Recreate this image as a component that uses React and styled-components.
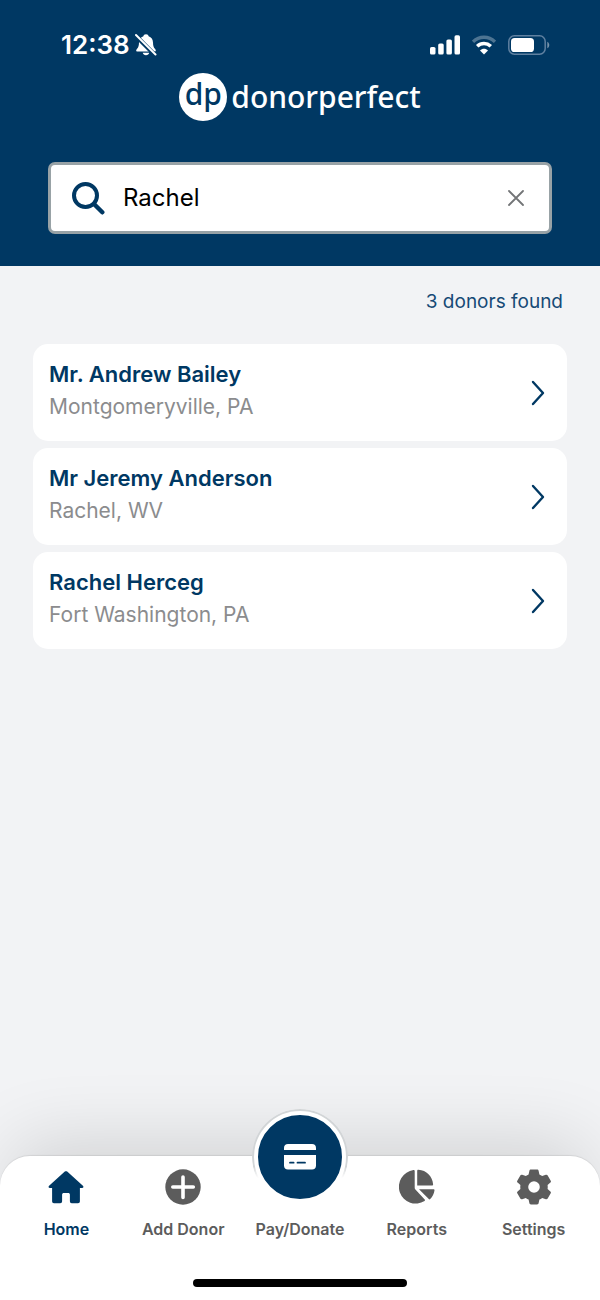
import { useState } from 'react'
import styled, { createGlobalStyle, ThemeProvider } from 'styled-components'

const theme = {
  colors: {
    primary: '#003863',
    background: '#f2f3f5',
    surface: '#ffffff',
    text: '#000000',
    textSecondary: '#8b8c8e',
    nav: '#5c5c5c',
    inputBorder: '#98a2a6'
  }
}

const GlobalStyle = createGlobalStyle`
  * {
    box-sizing: border-box;
  }

  body {
    margin: 0;
    background: ${({ theme }) => theme.colors.background};
    font-family: Inter, 'Liberation Sans', sans-serif;
  }
`

const Screen = styled.div`
  min-height: 100vh;
  display: flex;
  flex-direction: column;
  overflow: hidden;
`

const Header = styled.header`
  display: flex;
  flex-direction: column;
  padding: 28px 48px 32px;
  background: ${({ theme }) => theme.colors.primary};
  color: white;
`

const StatusBar = styled.div`
  display: flex;
  align-items: center;
  justify-content: space-between;
  height: 34px;
  padding: 0 2px 0 13px;
`

const StatusGroup = styled.div`
  display: flex;
  align-items: center;
  gap: ${({ $gap }) => $gap}px;
`

const Clock = styled.time`
  font-size: 26px;
  font-weight: 600;
  line-height: 34px;
`

const Brand = styled.div`
  display: flex;
  align-items: center;
  justify-content: center;
  gap: 4px;
  height: 48px;
  margin-top: 11px;
  font-family: 'Noto Sans', 'Open Sans', sans-serif;
`

const BrandMark = styled.span`
  width: 48px;
  height: 48px;
  border-radius: 50%;
  background: white;
  color: ${({ theme }) => theme.colors.primary};
  font-size: 30px;
  font-weight: 500;
  line-height: 42px;
  text-align: center;
`

const BrandName = styled.span`
  font-size: 30px;
  font-weight: 500;
  line-height: 44px;
`

const SearchForm = styled.form`
  display: flex;
  align-items: center;
  gap: 18px;
  height: 72px;
  margin-top: 41px;
  padding: 0 20px;
  background: ${({ theme }) => theme.colors.surface};
  border: 3px solid ${({ theme }) => theme.colors.inputBorder};
  border-radius: 7px;
  color: ${({ theme }) => theme.colors.primary};
`

const SearchInput = styled.input`
  flex: 1;
  min-width: 0;
  padding: 0;
  border: none;
  outline: none;
  background: transparent;
  color: ${({ theme }) => theme.colors.text};
  font-family: inherit;
  font-size: 24px;
  line-height: 32px;
`

const ClearButton = styled.button`
  display: flex;
  padding: 5px;
  border: none;
  background: none;
  color: #737577;
  cursor: pointer;
`

const Main = styled.main`
  flex: 1;
  padding: 22px 33px;
`

const ResultCount = styled.p`
  margin: 0 4px 28px;
  color: #164a75;
  font-size: 19px;
  line-height: 28px;
  text-align: right;
`

const DonorList = styled.ul`
  display: flex;
  flex-direction: column;
  gap: 7px;
  margin: 0;
  padding: 0;
  list-style: none;
`

const DonorCard = styled.a`
  display: flex;
  align-items: center;
  justify-content: space-between;
  min-height: 97px;
  padding: 0 22px 0 16px;
  background: ${({ theme }) => theme.colors.surface};
  border-radius: 15px;
  color: ${({ theme }) => theme.colors.primary};
  text-decoration: none;
`

const DonorInfo = styled.div`
  display: flex;
  flex-direction: column;
  gap: 5px;
  padding-bottom: 4px;
`

const DonorName = styled.span`
  font-size: 22px;
  font-weight: 600;
  line-height: 28px;
`

const DonorPlace = styled.span`
  color: ${({ theme }) => theme.colors.textSecondary};
  font-size: 21px;
  line-height: 28px;
`

const BottomBar = styled.footer`
  display: flex;
  flex-direction: column;
  align-items: center;
  gap: 38px;
  padding: 13px 8px;
  background: ${({ theme }) => theme.colors.surface};
  border-radius: 30px 30px 0 0;
  box-shadow: 0 -1px 1px rgba(0, 0, 0, 0.08), 0 -26px 76px -14px rgba(0, 0, 0, 0.14);
`

const Nav = styled.nav`
  display: grid;
  grid-template-columns: repeat(5, 1fr);
  width: 100%;
`

const NavItem = styled.a`
  position: relative;
  display: flex;
  flex-direction: column;
  align-items: center;
  gap: 12px;
  color: ${({ theme, $active }) => ($active ? theme.colors.primary : theme.colors.nav)};
  font-size: 16px;
  font-weight: 600;
  line-height: 24px;
  text-decoration: none;
  white-space: nowrap;
`

const IconSlot = styled.span`
  display: flex;
  align-items: center;
  justify-content: center;
  height: 36px;
`

// The raised circle sits over the top edge of the bar
const PayCircle = styled.span`
  position: absolute;
  bottom: 37px;
  display: flex;
  align-items: center;
  justify-content: center;
  width: 94px;
  height: 94px;
  border: 5px solid white;
  border-radius: 50%;
  background: ${({ theme }) => theme.colors.primary};
  color: white;

  &::before {
    content: '';
    position: absolute;
    inset: -6px;
    border: 2px solid #d2d5d7;
    border-radius: 50%;
    mask-image: linear-gradient(black 60%, transparent 72%);
  }
`

const HomeIndicator = styled.div`
  width: 214px;
  height: 8px;
  border-radius: 4px;
  background: black;
`

const BellOffIcon = () => (
  <svg width="22" height="24" viewBox="0 0 22 24" fill="currentColor" aria-hidden="true">
    <path d="M11 1.200c-1.500 0-2.500.9-2.600 2.100C5.600 4.300 4.100 6.500 4 9.500c-.1 3.300-.5 4.800-2.100 6.400-1.300 1.300-.8 2.600.8 2.600h16.600c1.600 0 2.100-1.300.8-2.600-1.600-1.600-2-3.100-2.100-6.400-.1-3-1.600-5.200-4.400-6.200C13.500 2.100 12.500 1.200 11 1.200zM7.700 19.800h6.600c-.4 1.500-1.600 2.500-3.300 2.500s-2.900-1-3.300-2.500z" />
    <path d="M0 2 20.500 22.500" stroke="#003863" strokeWidth="4.400" />
    <path d="M1 2 20.500 21.500" stroke="currentColor" strokeWidth="2" strokeLinecap="round" />
  </svg>
)

const SignalIcon = () => (
  <svg width="30" height="20" viewBox="0 0 30 20" fill="currentColor" aria-hidden="true">
    <rect x="0" y="12" width="5.500" height="7.500" rx="1.600" />
    <rect x="8.200" y="8.500" width="5.500" height="11" rx="1.600" />
    <rect x="16.400" y="4.500" width="5.500" height="15" rx="1.600" />
    <rect x="24.500" y="0.300" width="5.500" height="19.200" rx="1.600" />
  </svg>
)

const WifiIcon = () => (
  <svg width="24" height="20" viewBox="1 0 24 20" fill="none" stroke="currentColor" aria-hidden="true">
    <path d="M2 6.800C8.300.8 17.700.8 24 6.800" strokeWidth="3.400" opacity="0.3" />
    <path d="M6.200 11.200c4-3.700 9.600-3.700 13.600 0" strokeWidth="3.600" />
    <path d="M13 19.500 9 15.500c2.400-2.200 5.600-2.200 8 0z" fill="currentColor" stroke="none" />
  </svg>
)

const BatteryIcon = () => (
  <svg width="42" height="20" viewBox="0 0 42 20" aria-hidden="true">
    <rect x="0.800" y="0.800" width="36.400" height="18.400" rx="5.600" fill="none" stroke="#5f80a0" strokeWidth="1.500" />
    <rect x="3" y="3" width="23" height="14" rx="3.600" fill="white" />
    <path d="M39.300 6.700c2.600 1.300 2.600 5.300 0 6.600z" fill="#7793aa" />
  </svg>
)

const SearchIcon = () => (
  <svg width="34" height="34" viewBox="0 0 34 34" fill="none" stroke="currentColor" aria-hidden="true">
    <circle cx="14.500" cy="14.500" r="11.500" strokeWidth="4" />
    <path d="m23 23 8.300 8.300" strokeWidth="4.400" strokeLinecap="round" />
  </svg>
)

const CloseIcon = () => (
  <svg width="16" height="16" viewBox="0 0 16 16" stroke="currentColor" strokeWidth="1.800" strokeLinecap="round" aria-hidden="true">
    <path d="m1 1 14 14M15 1 1 15" />
  </svg>
)

const ChevronIcon = () => (
  <svg width="14" height="26" viewBox="0 0 14 26" fill="none" stroke="currentColor" strokeWidth="2.400" strokeLinecap="round" strokeLinejoin="round" aria-hidden="true">
    <path d="m2 2 10 11L2 24" />
  </svg>
)

const HomeIcon = () => (
  <svg width="36" height="36" viewBox="0 0 36 36" fill="currentColor" aria-hidden="true">
    <path d="M16.800 2.600c.7-.6 1.700-.6 2.400 0L34.900 16.700c1 .9.600 2.300-.8 2.300h-2.200v13.300c0 1.200-.7 1.900-1.900 1.900h-6.200c-1.200 0-1.900-.7-1.900-1.900v-6.600c0-1.100-.7-1.700-1.700-1.700h-4.400c-1 0-1.700.6-1.700 1.700v6.600c0 1.200-.7 1.900-1.900 1.900H6c-1.200 0-1.900-.7-1.900-1.900V19H1.900C.5 19 .1 17.600 1.100 16.700z" />
  </svg>
)

const AddIcon = () => (
  <svg width="36" height="36" viewBox="0 0 36 36" aria-hidden="true">
    <circle cx="18" cy="18" r="17.700" fill="currentColor" />
    <path d="M18 8v20.500M7.800 18h20.500" stroke="white" strokeWidth="3.600" strokeLinecap="round" />
  </svg>
)

const CardIcon = () => (
  <svg width="34" height="28" viewBox="0 0 34 28" fill="currentColor" aria-hidden="true">
    <path d="M1 7V5c0-2.500 1.500-4 4-4h24c2.500 0 4 1.500 4 4v2z" />
    <path d="M1 12h32v10.500c0 2.500-1.500 4-4 4H5c-2.500 0-4-1.500-4-4z" />
    <path d="M7 19.700h3.600M14.500 19.700h7.500" stroke="#003863" strokeWidth="1.800" strokeLinecap="round" />
  </svg>
)

const PieIcon = () => (
  <svg width="36" height="36" viewBox="0 0 36 36" fill="currentColor" aria-hidden="true">
    <path d="M15.700 1.900v16.800c0 .7.200 1.200.7 1.700l9.300 10.200c.4.500.4 1-.1 1.400A16.800 16.800 0 1 1 14.500 1.100c.8-.1 1.200.1 1.200.8z" />
    <path d="M18.200 2c0-.9.500-1.300 1.300-1.200 7.900.5 14 6.600 14.600 14.400.1.900-.3 1.300-1.200 1.300H18.200z" />
    <path d="M20 20.200h14.500c.7 0 1.100.4 1 1.100-.4 3.500-2 6.500-4.300 8.800-.5.500-1 .5-1.400 0z" />
  </svg>
)

const GearIcon = () => (
  <svg width="36" height="36" viewBox="0 0 36 36" aria-hidden="true">
    <path
      fill="currentColor"
      fillRule="evenodd"
      d="M14.900.5h6.200c.8 0 1.300.5 1.500 1.200l.8 3.700c.8.300 2 1 2.800 1.600l3.600-1.200c.8-.3 1.500 0 1.900.6l3 5.300c.4.700.3 1.400-.3 1.900l-2.800 2.500c.2 1.300.2 2.500 0 3.800l2.800 2.500c.6.500.7 1.200.3 1.900l-3 5.300c-.4.600-1.100.9-1.900.6L26.200 29c-.8.600-2 1.300-2.800 1.600l-.8 3.700c-.2.700-.7 1.200-1.500 1.200h-6.200c-.8 0-1.300-.5-1.500-1.200l-.8-3.700c-.8-.3-2-1-2.800-1.600l-3.600 1.200c-.8.300-1.500 0-1.900-.6l-3-5.300c-.4-.7-.3-1.400.3-1.900l2.800-2.500c-.2-1.300-.2-2.500 0-3.800l-2.800-2.500c-.6-.5-.7-1.200-.3-1.900l3-5.300c.4-.6 1.100-.9 1.900-.6L9.800 7c.8-.6 2-1.300 2.800-1.600l.8-3.700c.2-.7.700-1.200 1.500-1.200zM18 12.200a5.800 5.800 0 1 0 0 11.600 5.800 5.800 0 0 0 0-11.600z"
    />
  </svg>
)

const donors = [
  { id: 1, name: 'Mr. Andrew Bailey', place: 'Montgomeryville, PA' },
  { id: 2, name: 'Mr Jeremy Anderson', place: 'Rachel, WV' },
  { id: 3, name: 'Rachel Herceg', place: 'Fort Washington, PA' }
]

const navItems = [
  { label: 'Home', icon: HomeIcon, active: true },
  { label: 'Add Donor', icon: AddIcon },
  { label: 'Pay/Donate', icon: CardIcon, raised: true },
  { label: 'Reports', icon: PieIcon },
  { label: 'Settings', icon: GearIcon }
]

export default function App() {
  const [query, setQuery] = useState('Rachel')

  return (
    <ThemeProvider theme={theme}>
      <GlobalStyle />
      <Screen>
        <Header>
          <StatusBar>
            <StatusGroup $gap={5}>
              <Clock>12:38</Clock>
              <BellOffIcon />
            </StatusGroup>
            <StatusGroup $gap={12}>
              <SignalIcon />
              <WifiIcon />
              <BatteryIcon />
            </StatusGroup>
          </StatusBar>

          <Brand>
            <BrandMark>dp</BrandMark>
            <BrandName>donorperfect</BrandName>
          </Brand>

          <SearchForm role="search" onSubmit={(e) => e.preventDefault()}>
            <SearchIcon />
            <SearchInput
              type="text"
              name="query"
              aria-label="Search donors"
              value={query}
              onChange={(e) => setQuery(e.target.value)}
            />
            <ClearButton type="button" aria-label="Clear search" onClick={() => setQuery('')}>
              <CloseIcon />
            </ClearButton>
          </SearchForm>
        </Header>

        <Main>
          <ResultCount>{donors.length} donors found</ResultCount>
          <DonorList>
            {donors.map((donor) => (
              <li key={donor.id}>
                <DonorCard href={`#donor-${donor.id}`}>
                  <DonorInfo>
                    <DonorName>{donor.name}</DonorName>
                    <DonorPlace>{donor.place}</DonorPlace>
                  </DonorInfo>
                  <ChevronIcon />
                </DonorCard>
              </li>
            ))}
          </DonorList>
        </Main>

        <BottomBar>
          <Nav>
            {navItems.map(({ label, icon: Icon, active, raised }) => (
              <NavItem key={label} href="#" $active={active}>
                <IconSlot>{raised ? <PayCircle><Icon /></PayCircle> : <Icon />}</IconSlot>
                {label}
              </NavItem>
            ))}
          </Nav>
          <HomeIndicator />
        </BottomBar>
      </Screen>
    </ThemeProvider>
  )
}
